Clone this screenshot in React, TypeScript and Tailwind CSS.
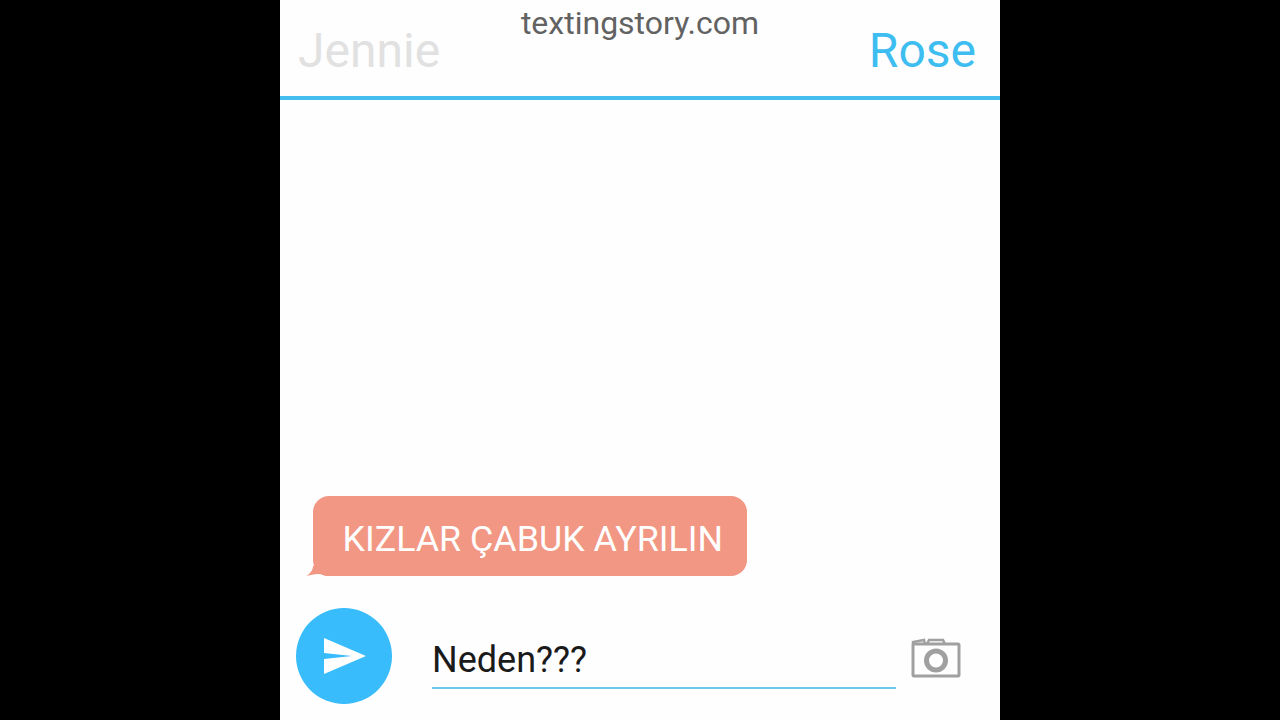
export default function App() {
  return (
    <div className="w-[1280px] h-[720px] bg-black flex justify-center overflow-hidden" style={{ fontFamily: "Roboto, sans-serif" }}>
      <div className="w-[720px] h-[720px] bg-[#fefefe] flex flex-col">
        <header className="h-[100px] shrink-0 border-b-4 border-[#45bdee] px-[18px] pr-6 flex flex-col">
          <div className="text-center text-[32px] leading-[47px] h-[47px] text-[#626262] pl-[6px]">textingstory.com</div>
          <div className="flex justify-between items-center text-[48px] leading-[10px] h-[8px]">
            <span className="text-[#e1e1e1]">Jennie</span>
            <span className="text-[#3dbdf0]">Rose</span>
          </div>
        </header>
        <main className="flex-1 flex flex-col justify-end pl-[33px] pb-8">
          <div className="relative self-start w-[434px] h-20 rounded-2xl bg-[#f19783] text-white text-[35.800px] leading-[86px] pl-[29.500px] whitespace-nowrap">
            KIZLAR ÇABUK AYRILIN
            <svg className="absolute left-[-7px] bottom-0" width="22" height="10" viewBox="0 0 22 10">
              <path d="M7 0 C7 4 4 8 0 10 C5 9 8 8 12 8 C16 8 18 10 22 10 L22 0 Z" fill="#f19783" />
            </svg>
          </div>
        </main>
        <footer className="h-[112px] shrink-0 flex items-start pl-4">
          <div className="w-24 h-24 rounded-full bg-[#39bcfb] flex items-center justify-center shrink-0">
            <svg width="44" height="36" viewBox="0 0 44 36">
              <path d="M2 0 L44 18 L2 36 L2 21 L30 18 L2 15 Z" fill="#fff" />
            </svg>
          </div>
          <div className="ml-10 w-[464px] h-[81px] border-b-2 border-[#6cc7ea] text-[36px] leading-[105px] text-[#1a1a1a]">Neden???</div>
          <svg className="ml-[15px] mt-[29px]" width="52" height="44" viewBox="0 0 52 44" fill="none" stroke="#a0a0a0">
            <path d="M3 7 H47 a1 1 0 0 1 1 1 V38 a1 1 0 0 1 -1 1 H3 a1 1 0 0 1 -1 -1 V8 a1 1 0 0 1 1 -1 Z" strokeWidth="3" />
            <path d="M2 7 V5 L13 3 L14 7 M16 7 L18 3 H32 L34 7" strokeWidth="2.500" />
            <circle cx="25" cy="23.500" r="9.500" strokeWidth="5" />
          </svg>
        </footer>
      </div>
    </div>
  );
}
